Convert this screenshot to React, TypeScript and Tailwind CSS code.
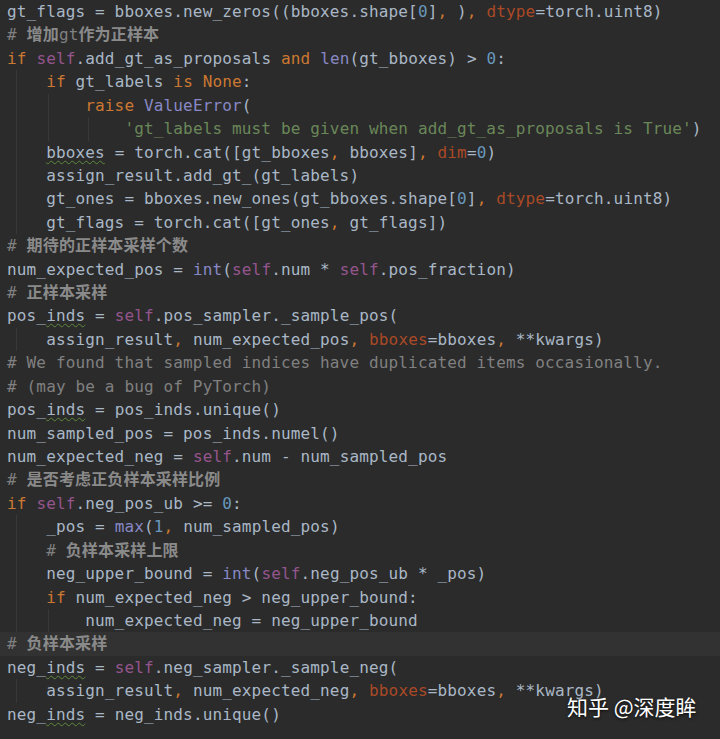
import React from "react";

type Tok = [string, string?];

const C: Record<string, string> = {
  d: "text-[#a9b7c6]",
  k: "text-[#cc7832]",
  s: "text-[#94558d]",
  n: "text-[#6897bb]",
  g: "text-[#6a8759]",
  c: "text-[#808080]",
  z: "text-[#8a8a8a] font-bold",
  p: "text-[#aa4926]",
  b: "text-[#8888c6]",
  w: "text-[#a9b7c6] underline decoration-wavy decoration-[#5e8a3c] decoration-1 underline-offset-[2px]",
};

type Line = { t: Tok[]; g?: number[]; hl?: boolean };

const sp = (n: number): Tok => [" ".repeat(n), "d"];

const lines: Line[] = [
  { t: [["gt_flags = bboxes.new_zeros((bboxes.shape[", "d"], ["0", "n"], ["]", "d"], [",", "k"], [" )", "d"], [",", "k"], [" ", "d"], ["dtype", "p"], ["=torch.uint8)", "d"]] },
  { t: [["# ", "c"], ["增加", "z"], ["gt", "c"], ["作为正样本", "z"]] },
  { t: [["if", "k"], [" ", "d"], ["self", "s"], [".add_gt_as_proposals ", "d"], ["and", "k"], [" ", "d"], ["len", "b"], ["(gt_bboxes) > ", "d"], ["0", "n"], [":", "d"]] },
  { t: [sp(4), ["if", "k"], [" gt_labels ", "d"], ["is", "k"], [" ", "d"], ["None", "k"], [":", "d"]], g: [16] },
  { t: [sp(8), ["raise", "k"], [" ", "d"], ["ValueError", "b"], ["(", "d"]], g: [16, 48] },
  { t: [sp(12), ["'gt_labels must be given when add_gt_as_proposals is True'", "g"], [")", "d"]], g: [16, 48, 88] },
  { t: [sp(4), ["bboxes", "w"], [" = torch.cat([gt_bboxes", "d"], [",", "k"], [" bboxes]", "d"], [",", "k"], [" ", "d"], ["dim", "p"], ["=", "d"], ["0", "n"], [")", "d"]], g: [16] },
  { t: [sp(4), ["assign_result.add_gt_(gt_labels)", "d"]], g: [16] },
  { t: [sp(4), ["gt_ones = bboxes.new_ones(gt_bboxes.shape[", "d"], ["0", "n"], ["]", "d"], [",", "k"], [" ", "d"], ["dtype", "p"], ["=torch.uint8)", "d"]], g: [16] },
  { t: [sp(4), ["gt_flags = torch.cat([gt_ones", "d"], [",", "k"], [" gt_flags])", "d"]], g: [16] },
  { t: [["# ", "c"], ["期待的正样本采样个数", "z"]] },
  { t: [["num_expected_pos = ", "d"], ["int", "b"], ["(", "d"], ["self", "s"], [".num * ", "d"], ["self", "s"], [".pos_fraction)", "d"]] },
  { t: [["# ", "c"], ["正样本采样", "z"]] },
  { t: [["pos_", "d"], ["inds", "w"], [" = ", "d"], ["self", "s"], [".pos_sampler._sample_pos(", "d"]] },
  { t: [sp(4), ["assign_result", "d"], [",", "k"], [" num_expected_pos", "d"], [",", "k"], [" ", "d"], ["bboxes", "p"], ["=bboxes", "d"], [",", "k"], [" **kwargs)", "d"]], g: [16] },
  { t: [["# We found that sampled indices have duplicated items occasionally.", "c"]] },
  { t: [["# (may be a bug of PyTorch)", "c"]] },
  { t: [["pos_", "d"], ["inds", "w"], [" = pos_inds.unique()", "d"]] },
  { t: [["num_sampled_pos = pos_inds.numel()", "d"]] },
  { t: [["num_expected_neg = ", "d"], ["self", "s"], [".num - num_sampled_pos", "d"]] },
  { t: [["# ", "c"], ["是否考虑正负样本采样比例", "z"]] },
  { t: [["if", "k"], [" ", "d"], ["self", "s"], [".neg_pos_ub >= ", "d"], ["0", "n"], [":", "d"]] },
  { t: [sp(4), ["_pos = ", "d"], ["max", "b"], ["(", "d"], ["1", "n"], [",", "k"], [" num_sampled_pos)", "d"]], g: [16] },
  { t: [sp(4), ["# ", "c"], ["负样本采样上限", "z"]], g: [16] },
  { t: [sp(4), ["neg_upper_bound = ", "d"], ["int", "b"], ["(", "d"], ["self", "s"], [".neg_pos_ub * _pos)", "d"]], g: [16] },
  { t: [sp(4), ["if", "k"], [" num_expected_neg > neg_upper_bound:", "d"]], g: [16] },
  { t: [sp(8), ["num_expected_neg = neg_upper_bound", "d"]], g: [16, 48] },
  { t: [["# ", "c"], ["负样本采样", "z"]], hl: true },
  { t: [["neg_", "d"], ["inds", "w"], [" = ", "d"], ["self", "s"], [".neg_sampler._sample_neg(", "d"]] },
  { t: [sp(4), ["assign_result", "d"], [",", "k"], [" num_expected_neg", "d"], [",", "k"], [" ", "d"], ["bboxes", "p"], ["=bboxes", "d"], [",", "k"], [" **kwargs)", "d"]], g: [16] },
  { t: [["neg_", "d"], ["inds", "w"], [" = neg_inds.unique()", "d"]] },
];

const guideCls: Record<number, string> = {
  16: "left-[16px]",
  48: "left-[48px]",
  88: "left-[88px]",
};

export default function App() {
  return (
    <div className="relative w-[720px] h-[739px] overflow-hidden bg-[#2b2b2b] font-['DejaVu_Sans_Mono','Noto_Sans_CJK_SC',monospace] text-[16px] leading-[23.43px] tracking-[0.15px]">
      <div className="flex flex-col">
        {lines.map((ln, i) => (
          <div
            key={i}
            className={`relative h-[23.43px] whitespace-pre pl-[7px] ${ln.hl ? "bg-[#323232]" : ""}`}
          >
            {(ln.g ?? []).map((x) => (
              <span key={x} className={`absolute top-0 bottom-0 w-px bg-[#383838] ${guideCls[x]}`} />
            ))}
            <span className="relative">
              {ln.t.map(([txt, c], j) => (
                <span key={j} className={C[c ?? "d"]}>
                  {txt}
                </span>
              ))}
            </span>
          </div>
        ))}
      </div>
      <div className="absolute left-[567px] top-[691px] whitespace-pre text-white text-[21px] leading-[30px] tracking-normal font-['Noto_Sans_CJK_SC',sans-serif] [text-shadow:0_1px_3px_rgba(0,0,0,0.8)]">
        知乎 @深度眸
      </div>
    </div>
  );
}
